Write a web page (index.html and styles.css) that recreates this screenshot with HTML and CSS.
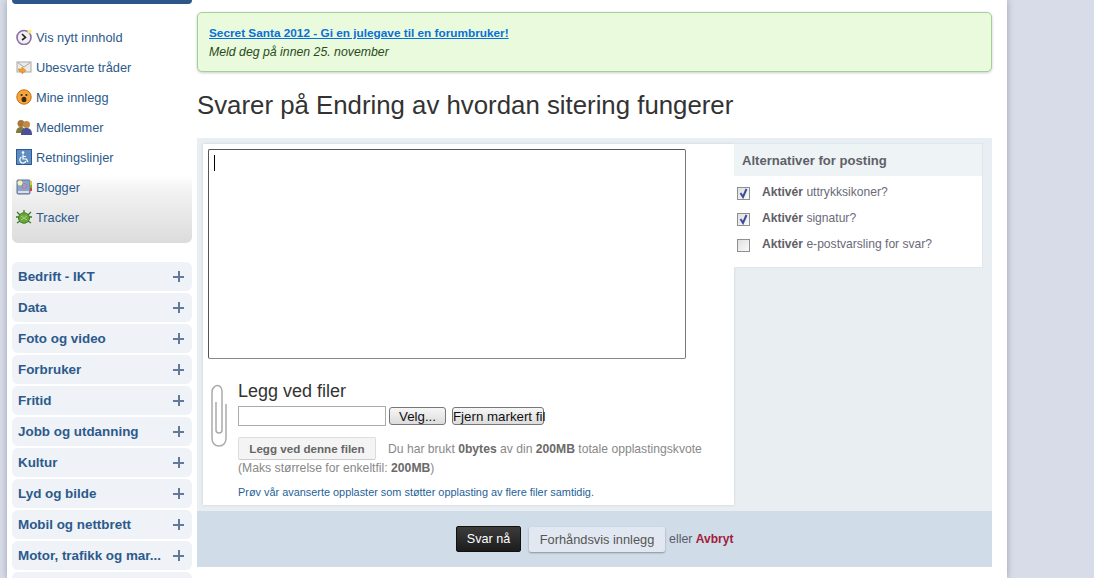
FILE: index.html
```html
<!DOCTYPE html>
<html lang="no">
<head>
  <meta charset="UTF-8">
  <title>Svarer på Endring av hvordan sitering fungerer</title>
  <link rel="stylesheet" href="styles.css">
</head>
<body>
  <div class="wrapper">
    <!-- Sidemeny -->
    <aside class="sidebar">
      <div class="topbar"></div>
      <ul class="quicknav">
        <li>
          <svg class="ico" viewBox="0 0 16 16"><circle cx="8" cy="8.5" r="7" fill="#f2eef4" stroke="#8a6fa0" stroke-width="1.6"/><path d="M6 5l3.5 3.5L6 11" fill="none" stroke="#222" stroke-width="1.6"/><circle cx="13.5" cy="2.5" r="2" fill="#f7ee70"/></svg>
          <a href="#">Vis nytt innhold</a>
        </li>
        <li>
          <svg class="ico" viewBox="0 0 16 16"><rect x="1" y="3" width="14" height="10" fill="#eceae4" stroke="#aaa"/><path d="M1 3l7 5 7-5" fill="none" stroke="#aaa"/><path d="M2 10h4V8l4 3.5L6 15v-2H4z" fill="#f0a030" stroke="#c87818" stroke-width=".5"/></svg>
          <a href="#">Ubesvarte tråder</a>
        </li>
        <li>
          <svg class="ico" viewBox="0 0 16 16"><circle cx="8" cy="8" r="7.2" fill="#f7a43a" stroke="#c66c14"/><circle cx="5.6" cy="6" r="1.1" fill="#333"/><circle cx="10.4" cy="6" r="1.1" fill="#333"/><ellipse cx="8" cy="10.4" rx="2.4" ry="2.6" fill="#3a2a1a"/></svg>
          <a href="#">Mine innlegg</a>
        </li>
        <li>
          <svg class="ico" viewBox="0 0 16 16"><circle cx="5" cy="4.5" r="3.5" fill="#a9763a"/><circle cx="10.5" cy="5.5" r="3.5" fill="#c08a45"/><path d="M0 14c0-4 2-6 5-6s4 2 4 6z" fill="#7d7a3a"/><path d="M5 16c0-5 2-7 5.5-7S16 11 16 16z" fill="#4a4f98"/></svg>
          <a href="#">Medlemmer</a>
        </li>
        <li>
          <svg class="ico" viewBox="0 0 16 16"><rect x=".5" y=".5" width="15" height="15" fill="#5f8cc0" stroke="#2c5a94"/><circle cx="7" cy="3.6" r="1.3" fill="#fff"/><path d="M7 5.500v4.500h3.500l1.500 3M7 7.500h3M5.500 8a3.200 3.200 0 1 0 4.500 4" fill="none" stroke="#fff" stroke-width="1.2"/></svg>
          <a href="#">Retningslinjer</a>
        </li>
        <li>
          <svg class="ico" viewBox="0 0 16 16"><rect x="1" y="1" width="13" height="14" rx="1" fill="#8ea3c8" stroke="#5d7299"/><rect x="14" y="2" width="2" height="4" fill="#d8c830"/><rect x="14" y="6" width="2" height="3" fill="#7cb040"/><rect x="14" y="9" width="2" height="3" fill="#d84030"/><circle cx="4" cy="4" r="2.5" fill="#f6f2b0"/><circle cx="8.5" cy="7" r="2.5" fill="none" stroke="#b07a9a"/><rect x="2" y="12" width="11" height="2" fill="#dde"/></svg>
          <a href="#">Blogger</a>
        </li>
        <li>
          <svg class="ico" viewBox="0 0 16 16"><path d="M1 3l3 3M15 3l-3 3M0 8h3M16 8h-3M1 14l3-2M15 14l-3-2M8 1v3" stroke="#3b7a22" stroke-width="1.3"/><ellipse cx="8" cy="9" rx="5.5" ry="5.2" fill="#6aa83c" stroke="#3b7a22"/><path d="M5 7l6 4M11 7l-6 4" stroke="#a6d070"/></svg>
          <a href="#">Tracker</a>
        </li>
      </ul>
      <ul class="categories">
        <li><a href="#">Bedrift - IKT</a><span class="plus"></span></li>
        <li><a href="#">Data</a><span class="plus"></span></li>
        <li><a href="#">Foto og video</a><span class="plus"></span></li>
        <li><a href="#">Forbruker</a><span class="plus"></span></li>
        <li><a href="#">Fritid</a><span class="plus"></span></li>
        <li><a href="#">Jobb og utdanning</a><span class="plus"></span></li>
        <li><a href="#">Kultur</a><span class="plus"></span></li>
        <li><a href="#">Lyd og bilde</a><span class="plus"></span></li>
        <li><a href="#">Mobil og nettbrett</a><span class="plus"></span></li>
        <li><a href="#">Motor, trafikk og mar...</a><span class="plus"></span></li>
        <li></li>
      </ul>
    </aside>

    <!-- Hovedinnhold -->
    <main class="content">
      <div class="notice">
        <a href="#">Secret Santa 2012 - Gi en julegave til en forumbruker!</a>
        <em>Meld deg på innen 25. november</em>
      </div>

      <h1>Svarer på Endring av hvordan sitering fungerer</h1>

      <form class="reply">
        <div class="reply-body">
          <div class="editor-area">
            <div class="editor"><span class="caret"></span></div>
            <div class="attach">
              <svg class="clip" viewBox="0 0 18 64"><path d="M6 18v28c0 4 6 4 6 0V7C12 3 9 1.5 7.5 1.5S2 3 2 8v46c0 5 3 8 7 8s7-3 7-8V20" fill="none" stroke="#aaa" stroke-width="1.5"/></svg>
              <div class="attach-main">
                <h3>Legg ved filer</h3>
                <div class="file-row">
                  <input type="text" class="file-name">
                  <button type="button" class="file-btn velg">Velg...</button>
                  <button type="button" class="file-btn fjern">Fjern markert fil</button>
                </div>
                <div class="upload-row">
                  <button type="button" class="upload-btn">Legg ved denne filen</button>
                  <span>Du har brukt <b>0bytes</b> av din <b>200MB</b> totale opplastingskvote</span>
                </div>
                <div class="maxsize">(Maks størrelse for enkeltfil: <b>200MB</b>)</div>
              </div>
            </div>
            <p class="advanced"><a href="#">Prøv vår avanserte opplaster som støtter opplasting av flere filer samtidig.</a></p>
          </div>

          <div class="options">
            <h4>Alternativer for posting</h4>
            <ul>
              <li>
                <span class="check"><svg viewBox="0 0 11 11"><path d="M2.5 5l2.500 4 3.500-8" fill="none" stroke="#3a4d9a" stroke-width="2"/></svg></span>
                <span><b>Aktivér</b> uttrykksikoner?</span>
              </li>
              <li>
                <span class="check"><svg viewBox="0 0 11 11"><path d="M2.5 5l2.500 4 3.500-8" fill="none" stroke="#3a4d9a" stroke-width="2"/></svg></span>
                <span><b>Aktivér</b> signatur?</span>
              </li>
              <li>
                <span class="check"></span>
                <span><b>Aktivér</b> e-postvarsling for svar?</span>
              </li>
            </ul>
          </div>
        </div>

        <div class="submit-bar">
          <button type="button" class="btn-dark">Svar nå</button>
          <button type="button" class="btn-light">Forhåndsvis innlegg</button>
          <span class="or">eller <a href="#">Avbryt</a></span>
        </div>
      </form>
    </main>
  </div>
</body>
</html>
```

FILE: styles.css
```css
html, body {
  margin: 0;
  padding: 0;
  height: 578px;
  overflow: hidden;
}
body {
  font-family: "Liberation Sans", Arial, sans-serif;
  font-size: 12px;
  color: #5a5a5a;
  background-color: #d8dce8;
}
ul {
  list-style: none;
  margin: 0;
  padding: 0;
}
a {
  color: #2c5a8c;
  text-decoration: none;
}

.wrapper {
  display: flex;
  width: 1000px;
  height: 578px;
  margin-left: 7px;
  background-color: #fff;
  box-shadow: 0 0 7px #9ba0ae;
}

/* Sidemeny */
.sidebar {
  width: 180px;
  margin-left: 5px;
  flex-shrink: 0;
}
.topbar {
  height: 4px;
  background-color: #2c5788;
  border-radius: 0 0 5px 5px;
}
.quicknav {
  height: 221px;
  padding-top: 18px;
  border-radius: 0 0 6px 6px;
  background: linear-gradient(to bottom, #fff 0, #fff 172px, #f3f3f3 185px, #dcdcdc 239px);
  margin-bottom: 19px;
}
.quicknav li {
  display: flex;
  align-items: center;
  height: 30px;
  padding-left: 4px;
  font-size: 12.8px;
}
.ico {
  width: 16px;
  height: 16px;
  margin-right: 4px;
  flex-shrink: 0;
}
.categories li {
  display: flex;
  align-items: center;
  justify-content: space-between;
  height: 29px;
  margin-bottom: 2px;
  padding: 0 8px 0 6px;
  background-color: #eff2f6;
  border-radius: 6px;
  font-size: 13.4px;
  font-weight: bold;
}
.plus {
  width: 11px;
  height: 11px;
  background:
    linear-gradient(#62799a, #62799a) center / 11px 2px no-repeat,
    linear-gradient(#62799a, #62799a) center / 2px 11px no-repeat;
}

/* Hovedinnhold */
.content {
  width: 795px;
  margin-left: 5px;
}
.notice {
  display: flex;
  flex-direction: column;
  gap: 5px;
  height: 60px;
  margin-top: 12px;
  padding: 13px 11px 0;
  box-sizing: border-box;
  background-color: #e9fbdc;
  border: 1px solid #a3cf98;
  border-radius: 5px;
  box-shadow: 0 1px 3px rgba(0, 0, 0, 0.2);
  color: #2b4a1c;
}
.notice a {
  color: #0a6fd8;
  font-size: 11.8px;
  font-weight: bold;
  text-decoration: underline;
}
.notice em {
  font-size: 12.3px;
}
h1 {
  margin: 19px 0 18px;
  font-size: 25.8px;
  font-weight: normal;
  line-height: 29px;
  color: #333;
}

.reply-body {
  display: flex;
  height: 361px;
  padding: 6px 9px 6px 6px;
  background-color: #e9eef2;
}
.editor-area {
  width: 531px;
  height: 361px;
  flex-shrink: 0;
  padding: 5px 0 0 5px;
  box-sizing: border-box;
  background-color: #fff;
  box-shadow: 0 0 3px rgba(0, 0, 0, 0.12);
}
.editor {
  position: relative;
  width: 476px;
  height: 208px;
  background-color: #fff;
  border: 1px solid #555;
  border-bottom-color: #888;
  border-right-color: #777;
  border-radius: 2px;
}
.caret {
  position: absolute;
  top: 5px;
  left: 5px;
  width: 1px;
  height: 16px;
  background-color: #000;
}
.attach {
  display: flex;
  margin-top: 21px;
}
.clip {
  width: 18px;
  height: 64px;
  margin: 4px 10px 0 2px;
  flex-shrink: 0;
}
.attach-main h3 {
  margin: 0;
  font-size: 18px;
  font-weight: normal;
  line-height: 22px;
  color: #333;
}
.file-row {
  display: flex;
  align-items: center;
  height: 20px;
  margin-top: 4px;
}
.file-name {
  width: 148px;
  height: 20px;
  padding: 0;
  box-sizing: border-box;
  border: 1px solid #aaa;
  background-color: #fff;
}
.file-btn {
  height: 18px;
  padding: 0;
  box-sizing: border-box;
  font-family: "Liberation Sans", Arial, sans-serif;
  font-size: 13.3px;
  color: #111;
  white-space: nowrap;
  border: 1px solid #777;
  border-radius: 3px;
  background: linear-gradient(to bottom, #f6f6f6, #dcdcdc);
}
.velg {
  width: 57px;
  margin-left: 3px;
}
.fjern {
  width: 92px;
  margin-left: 6px;
}
.upload-row {
  display: flex;
  align-items: center;
  margin-top: 11px;
  font-size: 12.15px;
  color: #888;
}
.upload-row b, .maxsize b {
  color: #6a6a6a;
}
.upload-btn {
  width: 138px;
  height: 23px;
  padding: 0;
  margin-right: 12px;
  font-family: "Liberation Sans", Arial, sans-serif;
  font-size: 11.6px;
  font-weight: bold;
  color: #666;
  background-color: #f4f4f4;
  border: 1px solid #ddd;
  border-bottom-color: #ccc;
  border-radius: 2px;
}
.maxsize {
  margin-top: 1px;
  font-size: 12.2px;
  color: #888;
  line-height: 15px;
}
.advanced {
  margin: 10px 0 0 30px;
  font-size: 10.9px;
  line-height: 13px;
}
.advanced a {
  color: #1e5f98;
}

.options {
  width: 249px;
  height: 125px;
  margin-top: -1px;
  box-sizing: border-box;
  background-color: #fff;
  border: 1px solid #e0e6ee;
  border-left: 0;
}
.options h4 {
  margin: 0;
  padding: 1px 0 0 8px;
  height: 32px;
  box-sizing: border-box;
  font-size: 13.1px;
  line-height: 31px;
  color: #5f5f68;
  background-color: #eef3f6;
}
.options li {
  display: flex;
  align-items: flex-start;
  height: 26px;
  padding: 9px 0 0 3px;
  box-sizing: border-box;
  font-size: 12.1px;
  color: #6a6a78;
  line-height: 14px;
}
.options li b {
  color: #5f5f68;
}
.check {
  width: 11px;
  height: 11px;
  margin: 2px 12px 0 0;
  background: linear-gradient(to bottom right, #e0e0e0, #fafafa);
  border: 1px solid #8e8f8f;
  flex-shrink: 0;
}
.check svg {
  display: block;
  width: 11px;
  height: 11px;
}

.submit-bar {
  display: flex;
  align-items: center;
  height: 56px;
  padding-left: 259px;
  background-color: #d1dce9;
}
.btn-dark {
  width: 65px;
  height: 26px;
  padding: 0;
  margin-right: 8px;
  font-family: "Liberation Sans", Arial, sans-serif;
  font-size: 12.6px;
  color: #fff;
  background: linear-gradient(to bottom, #3c3c3c, #1c1c1c);
  border: 1px solid #111;
  border-radius: 2px;
}
.btn-light {
  width: 136px;
  height: 25px;
  padding: 0;
  margin-right: 4px;
  font-family: "Liberation Sans", Arial, sans-serif;
  font-size: 12.8px;
  color: #555;
  background-color: #e2e8f1;
  border: 0;
  border-radius: 2px;
  box-shadow: 0 1px 2px rgba(0, 0, 0, 0.35);
}
.or {
  font-size: 12.4px;
  color: #5a5a68;
}
.or a {
  font-size: 12px;
  color: #a0203a;
  font-weight: bold;
}
```
